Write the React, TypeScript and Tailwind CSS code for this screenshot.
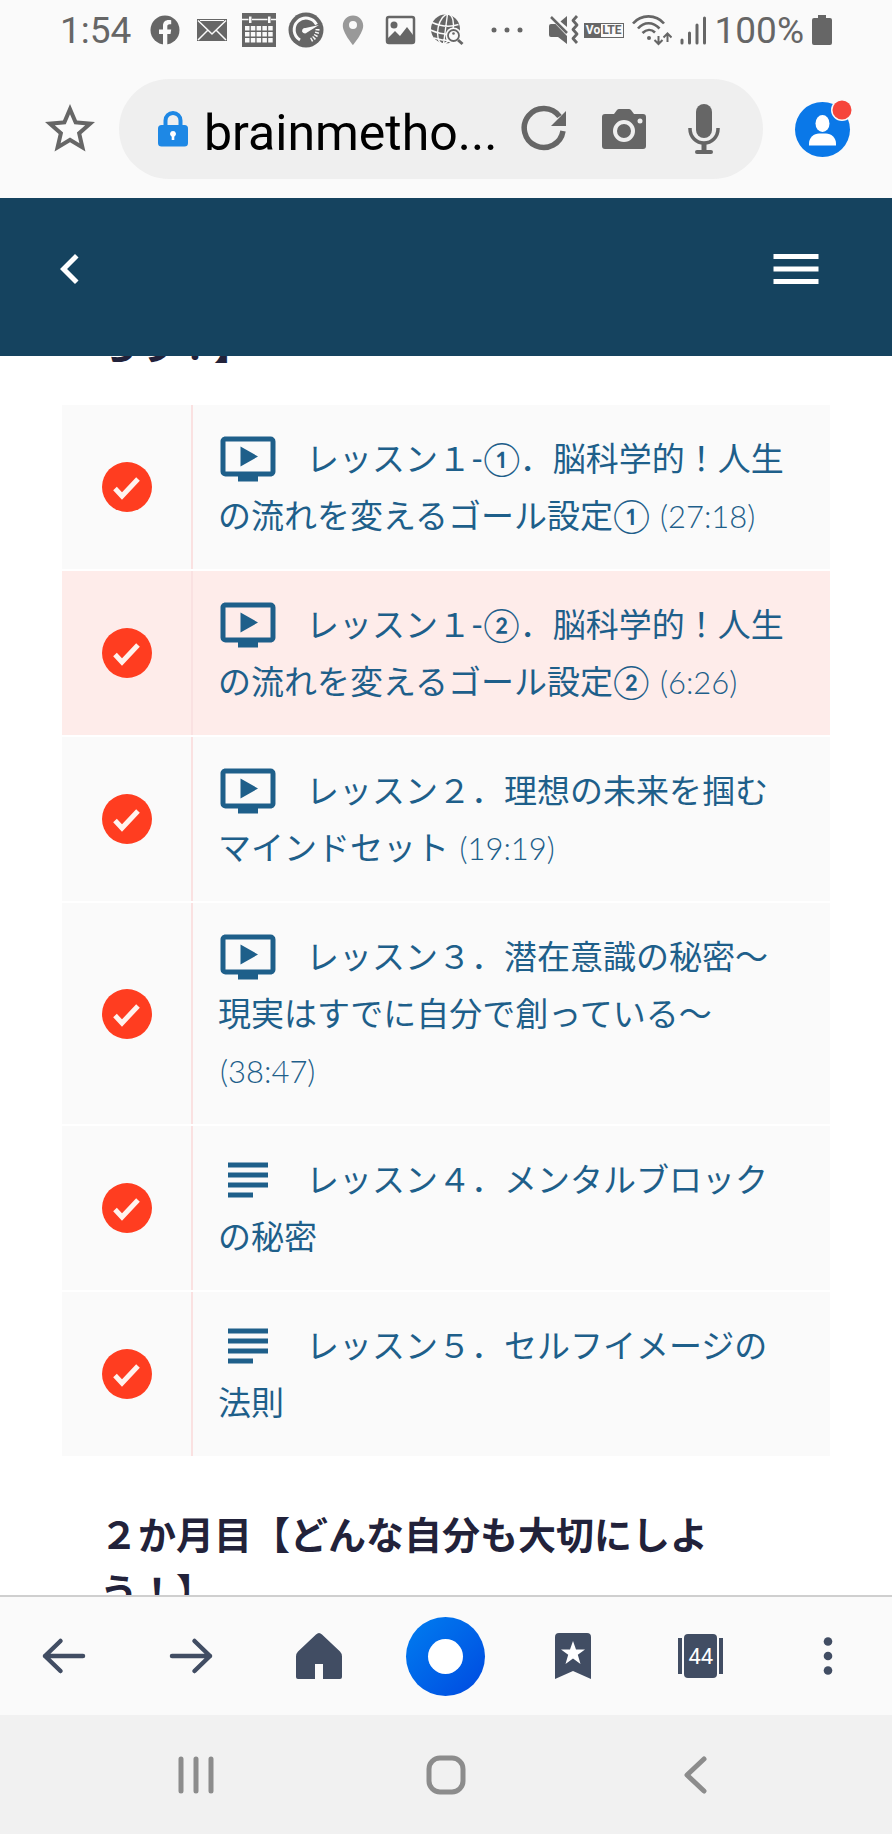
import { type ReactNode } from 'react';
import { MdChevronLeft, MdMenu, MdOndemandVideo, MdStarBorder, MdSubject } from 'react-icons/md';

interface Lesson {
  title: string;
  time?: string;
  type: 'video' | 'text';
  active?: boolean;
}

const LESSONS: Lesson[] = [
  { title: 'レッスン１-①．脳科学的！人生の流れを変えるゴール設定①', time: '(27:18)', type: 'video' },
  { title: 'レッスン１-②．脳科学的！人生の流れを変えるゴール設定②', time: '(6:26)', type: 'video', active: true },
  { title: 'レッスン２．理想の未来を掴むマインドセット', time: '(19:19)', type: 'video' },
  { title: 'レッスン３．潜在意識の秘密～現実はすでに自分で創っている～', time: '(38:47)', type: 'video' },
  { title: 'レッスン４．メンタルブロックの秘密', type: 'text' },
  { title: 'レッスン５．セルフイメージの法則', type: 'text' },
];

function StatusIcon({ children }: { children: ReactNode }) {
  return (
    <svg viewBox="0 0 36 36" className="w-9 h-9 shrink-0" fill="currentColor">
      {children}
    </svg>
  );
}

function StatusBar() {
  return (
    <div className="h-[60px] shrink-0 pl-[60px] pr-[60px] flex items-center text-[#666666] text-[37px] leading-none">
      <span className="mr-4">1:54</span>
      <div className="flex items-center gap-[11px]">
        <StatusIcon>
          <circle cx="18" cy="18" r="14.5" />
          <path d="M16 33V22h-4v-4.500h4v-3.500c0-4 2.200-6 5.800-6 1.200 0 2.400.2 2.400.2v4h-1.600c-1.800 0-2.300 1-2.300 2.200v3.100h3.900l-.7 4.500h-3.200v11z" fill="#fafafa" />
        </StatusIcon>
        <StatusIcon>
          <rect x="3" y="7" width="30" height="22" />
          <path d="M4 8.500l14 13.500 14-13.500M4 28l9.500-9.500M32 28l-9.500-9.500" fill="none" stroke="#fafafa" strokeWidth="1.500" />
          <path d="M6 8.500h24" stroke="#fafafa" strokeWidth="1" />
        </StatusIcon>
        <StatusIcon>
          <path d="M1 1h34v34H1z" />
          <path d="M1 7.500h6.500M11 7.500h15.500M30 7.500h5" stroke="#fafafa" strokeWidth="1.500" />
          <path d="M8 4.500h2.500v6.500H8zM27 4.500h2.500v6.500H27z" fill="#fafafa" />
          <path d="M4 14h4.500v4.500H4zM9.800 14h4.500v4.500H9.800zM15.600 14h4.500v4.500h-4.500zM21.400 14h4.500v4.500h-4.500zM27.200 14h4.500v4.500h-4.500zM4 20h4.500v4.500H4zM9.800 20h4.500v4.500H9.800zM15.600 20h4.500v4.500h-4.500zM21.400 20h4.500v4.500h-4.500zM27.200 20h4.500v4.500h-4.500zM4 26h4.500v4.500H4zM9.800 26h4.500v4.500H9.800zM15.600 26h4.500v4.500h-4.500zM21.400 26h4.500v4.500h-4.500zM27.200 26h4.500v4.500h-4.500z" fill="#fafafa" />
        </StatusIcon>
        <StatusIcon>
          <circle cx="18" cy="18" r="17.500" />
          <path d="M12 28A11.800 11.800 0 1 1 28.500 12.500" fill="none" stroke="#fafafa" strokeWidth="3" />
          <path d="M31 13L19 20.500a2.800 2.800 0 1 1-1.500-4.500z" fill="#fafafa" />
          <path d="M29.500 17c0 5-2.500 9-6.500 11" fill="none" stroke="#fafafa" strokeWidth="4" strokeDasharray="1.500 1.500" />
        </StatusIcon>
        <StatusIcon>
          <path d="M18 3.500c-5.800 0-10.200 4.400-10.200 10.200C7.800 21 18 33 18 33s10.200-12 10.200-19.300C28.200 7.900 23.800 3.500 18 3.500zm0 13.500a4 4 0 1 1 0-8 4 4 0 0 1 0 8z" fill="#999999" />
        </StatusIcon>
        <StatusIcon>
          <rect x="5" y="5" width="27" height="26" rx="2" fill="none" stroke="currentColor" strokeWidth="2.500" />
          <circle cx="12" cy="13" r="3.500" />
          <path d="M6 26l7-7 5 5 7-9 6 8v7H6z" />
        </StatusIcon>
        <StatusIcon>
          <circle cx="16.500" cy="17" r="14.500" />
          <g fill="none" stroke="#fafafa" strokeWidth="1.400">
            <ellipse cx="16.500" cy="17" rx="7.500" ry="15" transform="rotate(12 16.500 17)" />
            <path d="M18.500 2l-4 30M3 10.500c9 4 18 5 26.500 2M1.500 18c9 4 19 5.500 29 3M5 26c7 2 14 3.500 21 2" />
          </g>
          <circle cx="24.500" cy="23.500" r="8" fill="#fafafa" />
          <circle cx="24.500" cy="23.500" r="5.500" fill="none" stroke="currentColor" strokeWidth="1.800" />
          <circle cx="24.500" cy="21.500" r="1.300" />
          <path d="M29 28l4.500 4" stroke="currentColor" strokeWidth="3" />
        </StatusIcon>
      </div>
      <svg viewBox="0 0 36 36" className="w-9 h-9 ml-6" fill="currentColor">
        <circle cx="5" cy="18" r="2.500" />
        <circle cx="18" cy="18" r="2.500" />
        <circle cx="31" cy="18" r="2.500" />
      </svg>
      <div className="ml-auto flex items-center gap-2">
        <div className="flex items-center gap-1">
          <svg viewBox="0 0 32 32" className="w-8 h-8" fill="currentColor">
            <path d="M1 12q0-2 2-2h4.500L19 22v8l-9-7H3q-2 0-2-2z" />
            <path d="M3 3l16 16" stroke="currentColor" strokeWidth="2.500" />
            <path d="M12.500 7.500L19 2v11z" />
            <path d="M29 2l-4 4.500 4 4.500-4 4.500 4 4.500-4 4.500 4 4.500" fill="none" stroke="currentColor" strokeWidth="2.800" strokeLinejoin="round" />
          </svg>
          <span className="h-[15px] border border-[#666666] flex items-center text-[12px] leading-none font-bold">
            <span className="h-full px-px flex items-center bg-[#666666] text-[#fafafa]">Vo</span>
            <span className="px-px">LTE</span>
          </span>
        </div>
        <svg viewBox="0 0 40 32" className="w-10 h-8" fill="none" stroke="currentColor" strokeWidth="2.600">
          <path d="M1 9.500C9 0 24 0 32 9.500M6 14.500C12 7.500 21 7.500 27.500 14.500M10.500 19c4-4 9-4 12.500-.5" />
          <circle cx="17" cy="24" r="2" fill="currentColor" stroke="none" />
          <path d="M26.500 22v8M22.500 26l4 4 4-4M35.500 28v-8M31.500 23.500l4-4 4 4" strokeWidth="2" />
        </svg>
        <svg viewBox="0 0 27 32" className="w-[27px] h-8" stroke="currentColor" strokeWidth="3" strokeLinecap="round">
          <path d="M2 26v3M9.500 19v10M17 11v18M24.500 4v25" />
        </svg>
        <span>100%</span>
        <svg viewBox="0 0 20 32" className="w-5 h-8" fill="currentColor">
          <path d="M6 1h8v3h4q2 0 2 2v23q0 2-2 2H2q-2 0-2-2V6q0-2 2-2h4z" />
        </svg>
      </div>
    </div>
  );
}

function AddressBar() {
  return (
    <div className="h-[138px] shrink-0 pl-10 pr-[42px] flex items-center text-[#666666]">
      <button aria-label="ブックマークに追加" className="mr-[19px]">
        <MdStarBorder className="w-[60px] h-[60px]" />
      </button>
      <div className="flex-1 min-w-0 h-[100px] rounded-full bg-[#efefef] pl-[39px] pr-9 flex items-center">
        <svg viewBox="0 0 30 36" className="w-[30px] h-9 shrink-0">
          <path d="M7.500 16V9.500a7.500 7.500 0 0 1 15 0V16" fill="none" stroke="#1e88e5" strokeWidth="4" />
          <rect y="14" width="30" height="21.500" rx="3.500" fill="#1e88e5" />
          <path d="M15 20a3 3 0 0 1 1.300 5.700V29h-2.600v-3.300A3 3 0 0 1 15 20z" fill="#ffffff" />
        </svg>
        <input
          type="text"
          aria-label="アドレス"
          defaultValue="brainmetho..."
          className="flex-1 min-w-0 ml-4 pt-2 bg-transparent text-black text-[50px] leading-[60px] outline-none"
        />
        <div className="flex items-center shrink-0 gap-[34px]">
          <button aria-label="再読み込み">
            <svg viewBox="0 0 46 50" className="w-[46px] h-[50px]">
              <path d="M38.500 12.500A19.500 19.500 0 1 0 42 27" fill="none" stroke="currentColor" strokeWidth="5.500" />
              <path d="M45 7v15H30z" fill="currentColor" />
            </svg>
          </button>
          <button aria-label="画像検索">
            <svg viewBox="0 0 46 50" className="w-[46px] h-[50px]" fill="currentColor">
              <path d="M4 10h9l3-4q1-1 2-1h10q1 0 2 1l3 4h9q3 0 3 3v29q0 3-3 3H4q-3 0-3-3V13q0-3 3-3z" />
              <circle cx="23" cy="27" r="9" fill="none" stroke="#efefef" strokeWidth="4" />
              <circle cx="39" cy="17" r="2.500" fill="#efefef" />
            </svg>
          </button>
          <button aria-label="音声検索">
            <svg viewBox="0 0 46 50" className="w-[46px] h-[50px]">
              <rect x="15" y="0" width="16" height="34" rx="8" fill="currentColor" />
              <path d="M9 24v1a14 14 0 0 0 28 0v-1" fill="none" stroke="currentColor" strokeWidth="3.500" />
              <path d="M23 39v8" stroke="currentColor" strokeWidth="5" />
              <path d="M16 48h14" stroke="currentColor" strokeWidth="4" strokeLinecap="round" />
            </svg>
          </button>
        </div>
      </div>
      <button aria-label="アカウント" className="ml-8 shrink-0">
        <svg viewBox="0 0 55 55" className="w-[55px] h-[55px] overflow-visible">
          <circle cx="27.500" cy="27.500" r="27.500" fill="#0a78e8" />
          <ellipse cx="27.500" cy="21.500" rx="7" ry="8.500" fill="#ffffff" />
          <path d="M14 43.500v-2c0-6 5-10 10-10h7c5 0 10 4 10 10v2z" fill="#ffffff" />
          <circle cx="47" cy="8" r="11" fill="#fafafa" />
          <circle cx="47" cy="8" r="9.500" fill="#f6453b" />
        </svg>
      </button>
    </div>
  );
}

function LessonRow({ lesson }: { lesson: Lesson }) {
  const Icon = lesson.type === 'video' ? MdOndemandVideo : MdSubject;

  return (
    <li className={`flex ${lesson.active ? 'bg-[#feecea]' : 'bg-[#fafafa]'}`}>
      <div className="w-[131px] shrink-0 flex items-center justify-center border-r-2 border-[#fae1e1]">
        <svg viewBox="0 0 50 50" className="w-[50px] h-[50px]">
          <circle cx="25" cy="25" r="25" fill="#ff3d20" />
          <path d="M13 26.500l7 7.500L36 17" fill="none" stroke="#fff3ee" strokeWidth="5" />
        </svg>
      </div>
      <a href="#" className="flex-1 min-w-0 pl-[25px] pr-8 py-[25px] text-[33px] leading-[57px] text-[#1e5f8a]">
        <Icon className="inline-block align-[-10px] w-[60px] h-[60px] -my-2 mr-7" />
        {lesson.title} {lesson.time && <span className="ml-[2px] text-[31px] leading-none font-light">{lesson.time}</span>}
      </a>
    </li>
  );
}

function BottomBar() {
  return (
    <nav className="h-[120px] shrink-0 grid grid-cols-7 place-items-center bg-[#fafafa] border-t-2 border-[#cfcfcf] text-[#414d63]">
      <button aria-label="戻る">
        <svg viewBox="0 0 46 46" className="w-[46px] h-[46px]" fill="none" stroke="currentColor" strokeWidth="4.500" strokeLinecap="round" strokeLinejoin="round">
          <path d="M42 23H4M19.500 8L4 23l15.500 15" />
        </svg>
      </button>
      <button aria-label="進む">
        <svg viewBox="0 0 46 46" className="w-[46px] h-[46px]" fill="none" stroke="currentColor" strokeWidth="4.500" strokeLinecap="round" strokeLinejoin="round">
          <path d="M4 23h38M26.500 8L42 23 26.500 38" />
        </svg>
      </button>
      <button aria-label="ホーム">
        <svg viewBox="0 0 46 46" className="w-[46px] h-[46px]" fill="currentColor">
          <path d="M20 1.500q3-3 6 0l18 17q2 2 2 5V44q0 2-2 2H27V31h-8v15H2q-2 0-2-2V23.500q0-3 2-5z" />
        </svg>
      </button>
      <button
        aria-label="メニュー"
        className="w-[79px] h-[79px] rounded-full bg-linear-to-br from-[#007df0] to-[#0048e0] flex items-center justify-center"
      >
        <span className="w-[35px] h-[35px] rounded-full bg-white" />
      </button>
      <button aria-label="ブックマーク">
        <svg viewBox="0 0 36 46" className="w-9 h-[46px]" fill="currentColor">
          <path d="M4 0h28q4 0 4 4v42l-18-8-18 8V4q0-4 4-4z" />
          <path d="M18 8l3 8.500h9l-7.200 5.200L25.500 31 18 25.500 10.500 31l2.700-9.300L6 16.500h9z" fill="#ffffff" />
        </svg>
      </button>
      <button aria-label="タブ" className="flex items-center gap-[2px]">
        <span className="w-1 h-9 bg-[#414d63]" />
        <span className="w-[33px] h-11 rounded-[4px] bg-[#414d63] text-white text-[22px] leading-[46px] text-center">44</span>
        <span className="w-1 h-9 bg-[#414d63]" />
      </button>
      <button aria-label="その他">
        <svg viewBox="0 0 10 46" className="w-[10px] h-[46px] overflow-visible" fill="currentColor">
          <circle cx="5" cy="8.500" r="4.300" />
          <circle cx="5" cy="23" r="4.300" />
          <circle cx="5" cy="37.500" r="4.300" />
        </svg>
      </button>
    </nav>
  );
}

function SystemBar() {
  return (
    <div className="h-[119px] shrink-0 px-[8%] grid grid-cols-3 place-items-center bg-[#f1f1f1] text-[#8c8c8c]">
      <button aria-label="履歴">
        <svg viewBox="0 0 40 40" className="w-10 h-10" stroke="currentColor" strokeWidth="5" strokeLinecap="round">
          <path d="M5 4v32M20 4v32M35 4v32" />
        </svg>
      </button>
      <button aria-label="ホーム画面">
        <svg viewBox="0 0 40 40" className="w-10 h-10" fill="none" stroke="currentColor" strokeWidth="5">
          <rect x="3" y="3" width="34" height="34" rx="11" />
        </svg>
      </button>
      <button aria-label="前の画面">
        <svg viewBox="0 0 40 40" className="w-10 h-10" fill="none" stroke="currentColor" strokeWidth="5" strokeLinecap="round" strokeLinejoin="round">
          <path d="M28 4L11 20l17 16" />
        </svg>
      </button>
    </div>
  );
}

export default function App() {
  return (
    <div className="h-screen flex flex-col overflow-hidden bg-[#fafafa] font-[Roboto,'Noto_Sans_CJK_JP',sans-serif]">
      <StatusBar />
      <AddressBar />
      <header className="h-[158px] shrink-0 pl-10 pr-[66px] pb-4 flex items-center justify-between bg-[#15435f] text-white">
        <button aria-label="前のページ">
          <MdChevronLeft className="w-[60px] h-[60px]" />
        </button>
        <button aria-label="コースメニュー">
          <MdMenu className="w-[60px] h-[60px]" />
        </button>
      </header>

      <main className="flex-1 min-h-0 overflow-hidden bg-white px-[62px] font-[Lato,'Noto_Sans_CJK_JP',sans-serif]">
        {/* 前のセクション見出しはヘッダーの下に隠れている */}
        <h2 className="-mt-10 mb-8 pl-[38px] text-[38px] leading-[57px] font-bold text-[#22223a]">ろう！】</h2>
        <ul className="flex flex-col gap-[2px]">
          {LESSONS.map((lesson) => (
            <LessonRow key={lesson.title} lesson={lesson} />
          ))}
        </ul>
        <h2 className="mt-[50px] pl-[38px] text-[38px] leading-[57px] font-bold text-[#22223a]">
          ２か月目【どんな自分も大切にしよ
          <br />
          う！】
        </h2>
      </main>

      <BottomBar />
      <SystemBar />
    </div>
  );
}
